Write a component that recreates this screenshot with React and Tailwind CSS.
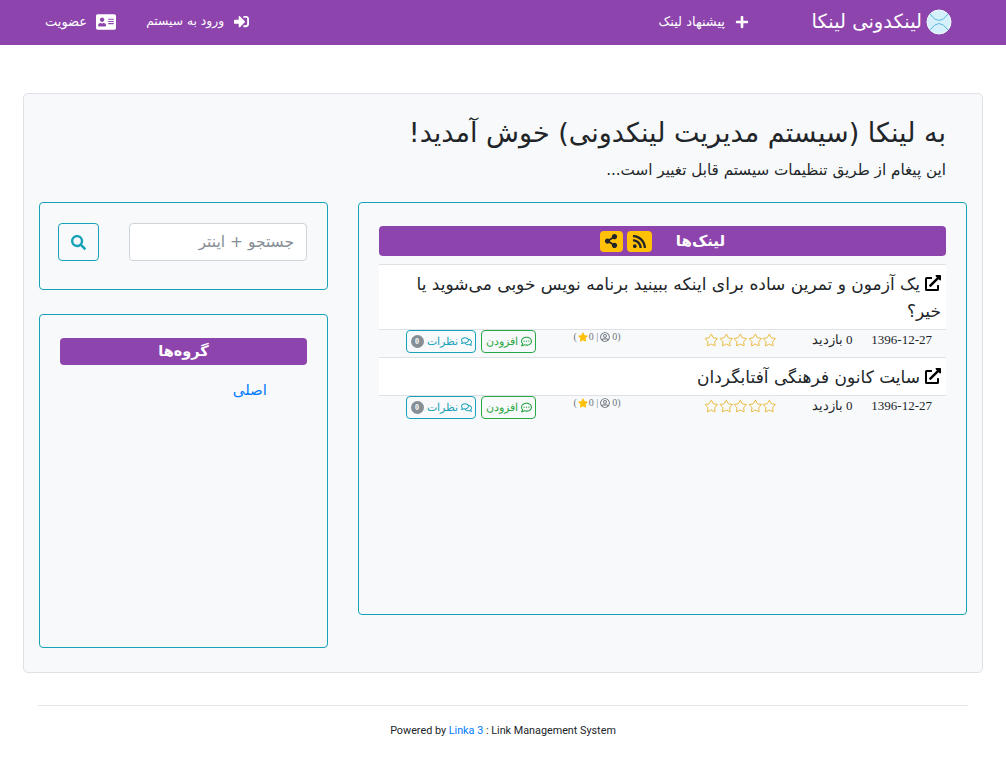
import React from "react";
import {
  FaAddressCard,
  FaExternalLinkAlt,
  FaPlus,
  FaRegCommentDots,
  FaRegComments,
  FaRegUserCircle,
  FaRss,
  FaSearch,
  FaShareAlt,
  FaSignInAlt,
  FaStar,
} from "react-icons/fa";
import { Star } from "lucide-react";

const links = [
  { title: "یک آزمون و تمرین ساده برای اینکه ببینید برنامه نویس خوبی می‌شوید یا خیر؟" },
  { title: "سایت کانون فرهنگی آفتابگردان" },
];

const Logo = () => (
  <svg width="26" height="26" viewBox="0 0 26 26">
    <circle cx="13" cy="13" r="12" fill="#d6f0fb" stroke="#eefaff" strokeWidth="1" />
    <path d="M4 5 Q13 18 22 5 M4 21 Q13 8 22 21" fill="none" stroke="#5bb8de" strokeWidth="1" />
  </svg>
);

const LinkRow = ({ title }) => (
  <div>
    <div className="bg-white border-t border-[#dee2e6] pt-[6px] pb-[4px] px-[5px] text-[17px] leading-[27px] text-[#212529]">
      <FaExternalLinkAlt className="inline-block text-[16px] ml-[5px] align-[-1px] text-black" />
      {title}
    </div>
    <div className="flex items-start h-[28px] bg-[#f8f9fa] border-t border-[#dee2e6] font-['Liberation_Serif',serif] text-[13px] text-[#212529]">
      <div className="w-[85px] shrink-0 pr-[14px] pt-[1px] leading-[18px] whitespace-nowrap">1396-12-27</div>
      <div className="w-[58px] shrink-0 pt-[1px] leading-[18px] text-center">0 بازدید</div>
      <div className="flex w-[155px] shrink-0 pt-[3px] pr-[26px] text-[#e5ad1a]">
        <Star size={14.6} strokeWidth={1.4} />
        <Star size={14.6} strokeWidth={1.4} />
        <Star size={14.6} strokeWidth={1.4} />
        <Star size={14.6} strokeWidth={1.4} />
        <Star size={14.6} strokeWidth={1.4} />
      </div>
      <div dir="ltr" className="flex items-center w-[102px] shrink-0 justify-center gap-[1px] text-[10px] leading-[14px] text-[#6c757d]">
        <span>(</span>
        <FaStar className="text-[#ffc107] text-[10px]" />
        <span>0 |</span>
        <FaRegUserCircle className="text-[10px] mx-[1px]" />
        <span>0)</span>
      </div>
      <div className="flex gap-[5px] mr-[10px] shrink-0">
        <button className="flex items-center justify-center gap-[3px] w-[55px] h-[23px] rounded-[4px] border border-[#28a745] text-[#28a745] text-[10.5px]">
          <FaRegCommentDots className="text-[11px]" />
          افزودن
        </button>
        <button className="flex items-center justify-center gap-[3px] w-[70px] h-[23px] rounded-[4px] border border-[#17a2b8] text-[#17a2b8] text-[10.5px]">
          <FaRegComments className="text-[11px]" />
          نظرات
          <span className="flex items-center justify-center w-[13px] h-[13px] rounded-full bg-[#868e96] text-white text-[8px] font-bold">0</span>
        </button>
      </div>
    </div>
  </div>
);

export default function App() {
  return (
    <div dir="rtl" className="min-h-[762px] bg-white font-['DejaVu_Sans',sans-serif] text-[#212529]">
      <nav className="flex items-center h-[45px] bg-[#8e44ad] text-white pr-[54px] pl-[45px] pb-[2px]">
        <div className="flex items-center gap-[4px] w-[203px] shrink-0">
          <Logo />
          <span className="text-[19.5px]">لینکدونی لینکا</span>
        </div>
        <div className="flex items-center gap-[10px] text-[13px]">
          <FaPlus className="text-[14px]" />
          پیشنهاد لینک
        </div>
        <div className="flex items-center gap-[30px] mr-auto">
          <div className="flex items-center gap-[10px] text-[12.3px]">
            <FaSignInAlt className="text-[15px]" />
            ورود به سیستم
          </div>
          <div className="flex items-center gap-[9px] text-[13px]">
            <FaAddressCard className="text-[20px]" />
            عضویت
          </div>
        </div>
      </nav>

      <main className="mx-[23px] mt-[48px] h-[580px] rounded-[5px] border border-[#dee2e6] bg-[#f8f9fa] px-[15px] pt-[21px]">
        <h1 className="text-[27px] leading-[36px] pr-[21px]">به لینکا (سیستم مدیریت لینکدونی) خوش آمدید!</h1>
        <p className="text-[15.2px] leading-[21px] pr-[21px] mt-[9px]">این پیغام از طریق تنظیمات سیستم قابل تغییر است...</p>

        <div className="flex justify-between mt-[21px]">
          <section className="w-[609px] h-[413px] rounded-[4px] border border-[#17a2b8] px-[20px] pt-[23px]">
            <div className="flex items-center justify-center gap-[4px] h-[30px] rounded-[4px] bg-[#8e44ad] text-white">
              <span className="text-[15px] font-bold ml-[20px]">لینک‌ها</span>
              <span className="flex items-center justify-center w-[25px] h-[21px] rounded-[4px] bg-[#ffc107] text-[#212529]">
                <FaRss className="text-[15px]" />
              </span>
              <span className="flex items-center justify-center w-[23px] h-[21px] rounded-[4px] bg-[#ffc107] text-[#212529]">
                <FaShareAlt className="text-[14px]" />
              </span>
            </div>
            <div className="mt-[8px]">
              {links.map((l) => (
                <LinkRow key={l.title} title={l.title} />
              ))}
            </div>
          </section>

          <aside className="w-[289px] flex flex-col gap-[24px]">
            <div className="flex items-start justify-between h-[88px] rounded-[4px] border border-[#17a2b8] pt-[20px] pr-[20px] pl-[18px]">
              <input
                placeholder="جستجو + اینتر"
                className="w-[178px] h-[38px] rounded-[4px] border border-[#ced4da] bg-white px-[12px] text-[15.5px] placeholder:text-[#868e96] outline-none"
              />
              <button className="flex items-center justify-center w-[41px] h-[38px] rounded-[4px] border border-[#17a2b8] text-[#17a2b8]">
                <FaSearch className="text-[15px]" />
              </button>
            </div>
            <div className="h-[334px] rounded-[4px] border border-[#17a2b8] px-[20px] pt-[23px]">
              <div className="flex items-center justify-center h-[27px] rounded-[4px] bg-[#8e44ad] text-white text-[14.5px] font-bold">گروه‌ها</div>
              <a className="block mt-[13px] pr-[40px] text-[15px] leading-[24px] text-[#007bff]">اصلی</a>
            </div>
          </aside>
        </div>
      </main>

      <footer dir="ltr" className="mx-[38px] mt-[32px] border-t border-[#e5e7eb] pt-[16px] text-center text-[10.8px] font-['Roboto',sans-serif] leading-[17px]">
        Powered by <span className="text-[#007bff]">Linka 3</span> : Link Management System
      </footer>
    </div>
  );
}
